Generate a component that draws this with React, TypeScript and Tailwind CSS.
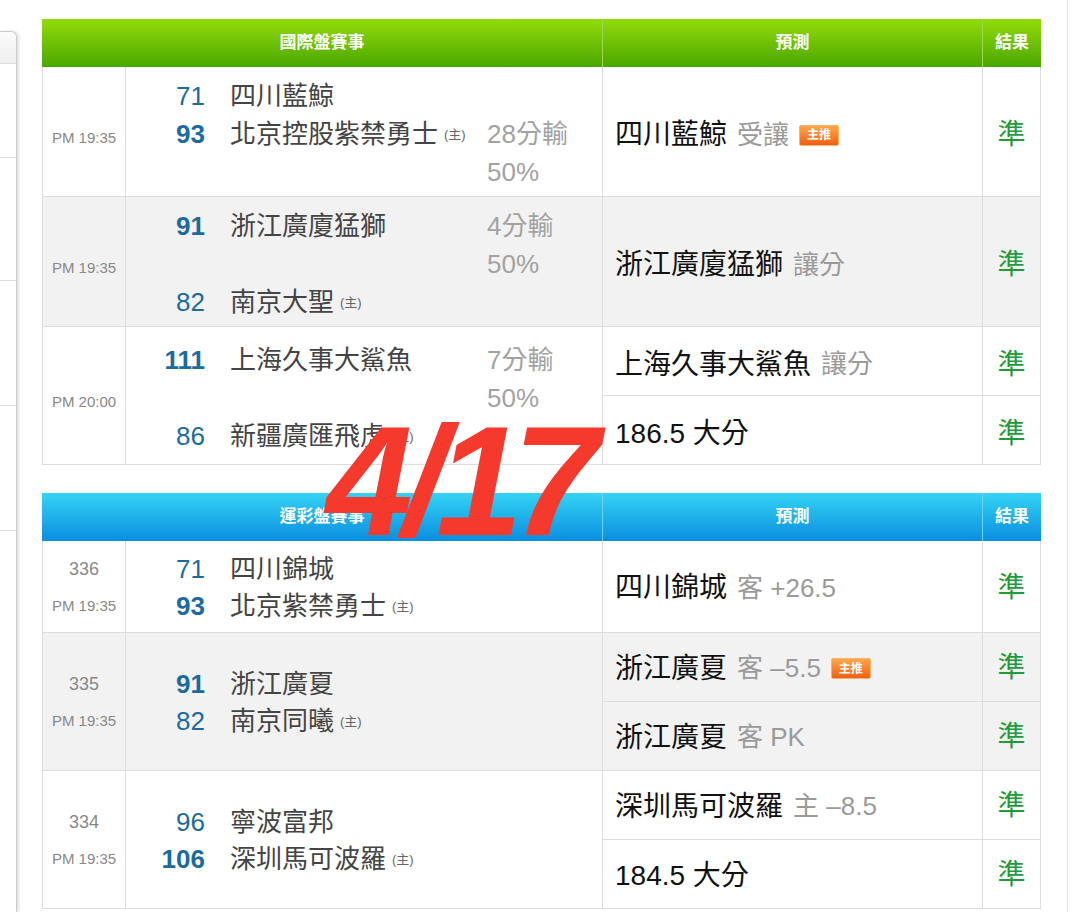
import React from "react";

type Line = { num?: string; bold?: boolean; name?: string; home?: boolean; spread?: string };
type Pick = { main: string; extra?: string; badge?: boolean };
type Game = {
  code?: string;
  time: string;
  h: string;
  gray?: boolean;
  lines: Line[];
  picks: Pick[];
};

const intl: Game[] = [
  {
    time: "PM 19:35",
    h: "h-[130px]",
    lines: [
      { num: "71", name: "四川藍鯨" },
      { num: "93", bold: true, name: "北京控股紫禁勇士", home: true, spread: "28分輸" },
      { spread: "50%" },
    ],
    picks: [{ main: "四川藍鯨", extra: "受讓", badge: true }],
  },
  {
    time: "PM 19:35",
    h: "h-[130px]",
    gray: true,
    lines: [
      { num: "91", bold: true, name: "浙江廣廈猛獅", spread: "4分輸" },
      { spread: "50%" },
      { num: "82", name: "南京大聖", home: true },
    ],
    picks: [{ main: "浙江廣廈猛獅", extra: "讓分" }],
  },
  {
    time: "PM 20:00",
    h: "h-[137px]",
    lines: [
      { num: "111", bold: true, name: "上海久事大鯊魚", spread: "7分輸" },
      { spread: "50%" },
      { num: "86", name: "新疆廣匯飛虎", home: true },
    ],
    picks: [{ main: "上海久事大鯊魚", extra: "讓分" }, { main: "186.5 大分" }],
  },
];

const lottery: Game[] = [
  {
    code: "336",
    time: "PM 19:35",
    h: "h-[92px]",
    lines: [
      { num: "71", name: "四川錦城" },
      { num: "93", bold: true, name: "北京紫禁勇士", home: true },
    ],
    picks: [{ main: "四川錦城", extra: "客 +26.5" }],
  },
  {
    code: "335",
    time: "PM 19:35",
    h: "h-[138px]",
    gray: true,
    lines: [
      { num: "91", bold: true, name: "浙江廣夏" },
      { num: "82", name: "南京同曦", home: true },
    ],
    picks: [
      { main: "浙江廣夏", extra: "客 –5.5", badge: true },
      { main: "浙江廣夏", extra: "客 PK" },
    ],
  },
  {
    code: "334",
    time: "PM 19:35",
    h: "h-[137px]",
    lines: [
      { num: "96", name: "寧波富邦" },
      { num: "106", bold: true, name: "深圳馬可波羅", home: true },
    ],
    picks: [{ main: "深圳馬可波羅", extra: "主 –8.5" }, { main: "184.5 大分" }],
  },
];

const Badge = () => (
  <span className="ml-[10px] inline-flex h-[21px] w-[40px] items-center justify-center rounded-[2px] border border-[#f7b46b] bg-gradient-to-b from-[#ffa64a] to-[#ee5e10] text-[12px] leading-none font-bold text-white">
    主推
  </span>
);

function TeamLines({ lines, tall }: { lines: Line[]; tall: boolean }) {
  return (
    <div className={`flex flex-col ${tall ? "pt-[6px]" : "pt-[3px]"}`}>
      {lines.map((l, i) => (
        <div key={i} className={`flex items-center ${tall ? "h-[38px]" : "h-[37px]"}`}>
          <span
            className={`w-[79px] text-right text-[26px] text-[#1b6b9e] ${l.bold ? "font-bold" : ""}`}
          >
            {l.num}
          </span>
          <span className="ml-[25px] flex w-[257px] items-center text-[26px] text-[#444]">
            {l.name}
            {l.home && <span className="ml-[6px] text-[13px] text-[#666]">(主)</span>}
          </span>
          <span className="text-[26px] text-[#a2a2a2]">{l.spread}</span>
        </div>
      ))}
    </div>
  );
}

function GameRow({ g, last }: { g: Game; last: boolean }) {
  const tall = !g.code;
  return (
    <div
      className={`flex ${g.h} ${last ? "" : "border-b border-[#dddddd]"} ${g.gray ? "bg-[#f2f2f2]" : "bg-white"}`}
    >
      <div className="flex w-[83px] flex-col items-center justify-center border-r border-[#dddddd] text-[#888]">
        {g.code ? (
          <div className="flex flex-col pt-[3px]">
            <div className="flex h-[37px] items-center justify-center text-[18px]">{g.code}</div>
            <div className="flex h-[37px] items-center justify-center text-[15px]">{g.time}</div>
          </div>
        ) : (
          <div className="pt-[14px] text-[15px]">{g.time}</div>
        )}
      </div>
      <div className="flex w-[477px] flex-col justify-center border-r border-[#dddddd]">
        <TeamLines lines={g.lines} tall={tall} />
      </div>
      <div className="flex flex-1 flex-col">
        {g.picks.map((p, i) => (
          <div
            key={i}
            className={`flex flex-1 ${i < g.picks.length - 1 ? "border-b border-[#dddddd]" : ""}`}
          >
            <div
              className={`flex w-[380px] items-center border-r border-[#dddddd] pl-[12px] ${tall ? "pt-[7px]" : "pt-[3px]"}`}
            >
              <span className="text-[28px] text-[#111]">{p.main}</span>
              {p.extra && <span className="ml-[10px] text-[26px] text-[#9a9a9a]">{p.extra}</span>}
              {p.badge && <Badge />}
            </div>
            <div
              className={`flex flex-1 items-center justify-center text-[28px] text-[#1f9b3a] ${tall ? "pt-[7px]" : "pt-[2px]"}`}
            >
              準
            </div>
          </div>
        ))}
      </div>
    </div>
  );
}

function Board({ title, games, blue }: { title: string; games: Game[]; blue?: boolean }) {
  const head = blue
    ? "bg-gradient-to-b from-[#35d3f4] to-[#0a8ee0]"
    : "bg-gradient-to-b from-[#92dc0c] to-[#4aa600]";
  const div = blue ? "border-[#6fd0f2]" : "border-[#9ad85a]";
  return (
    <div className="w-[999px]">
      <div className={`flex h-[48px] text-[17px] font-bold text-white ${head}`}>
        <div className={`flex w-[561px] items-center justify-center border-r ${div}`}>{title}</div>
        <div className={`flex w-[380px] items-center justify-center border-r ${div}`}>預測</div>
        <div className="flex flex-1 items-center justify-center">結果</div>
      </div>
      <div className="border-x border-b border-[#dddddd]">
        {games.map((g, i) => (
          <GameRow key={i} g={g} last={i === games.length - 1} />
        ))}
      </div>
    </div>
  );
}

export default function App() {
  return (
    <div className="relative flex h-[912px] w-[1080px] overflow-hidden bg-white font-['Liberation_Sans','Noto_Sans_CJK_TC',sans-serif]">
      <div className="mt-[31px] flex w-[17px] flex-col rounded-tr-[6px] border-t border-r border-[#cccccc] shadow-[2px_0_3px_rgba(0,0,0,0.12)]">
        <div className="h-[32px] rounded-tr-[6px] border-b border-[#dddddd] bg-gradient-to-b from-[#fbfbfb] to-[#efefef]" />
        <div className="h-[94px] border-b border-[#dddddd]" />
        <div className="h-[123px] border-b border-[#dddddd]" />
        <div className="h-[125px] border-b border-[#dddddd]" />
        <div className="h-[125px] border-b border-[#dddddd]" />
        <div className="flex-1" />
      </div>
      <div className="ml-[25px] flex flex-col gap-[28px] pt-[19px]">
        <Board title="國際盤賽事" games={intl} />
        <Board title="運彩盤賽事" games={lottery} blue />
      </div>
      <div className="ml-[26px] w-px bg-[#e6e6e6]" />
      <div className="absolute top-[403px] left-[326px] text-[156px] leading-none font-bold tracking-[-10px] text-[#f53a2d] italic">
        4/17
      </div>
    </div>
  );
}
